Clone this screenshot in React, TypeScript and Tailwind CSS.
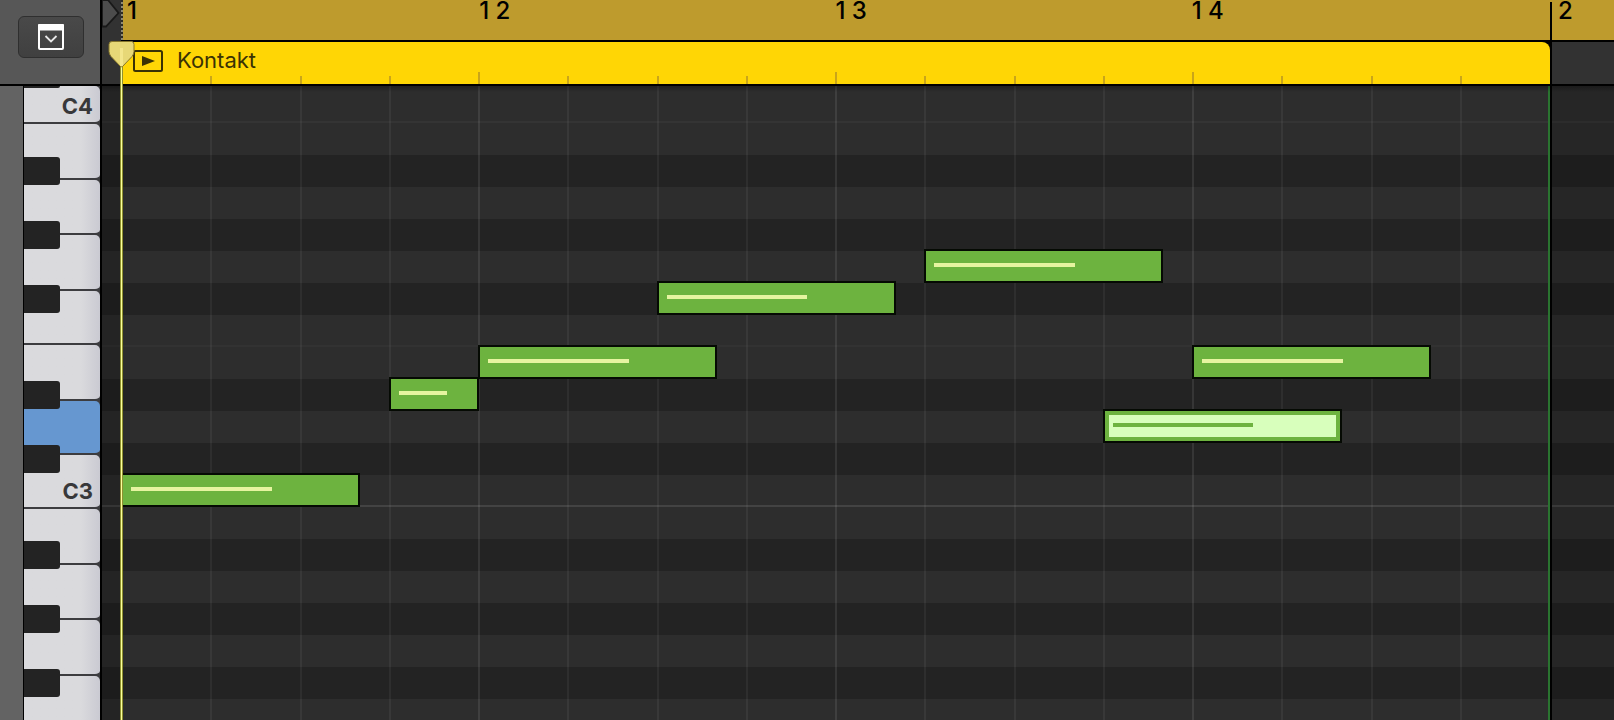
import React from "react";

type Note = { row: number; start: number; length: number; selected?: boolean };

const STEPS = 16;
const ROW = 32;
const TOP_ROW = 37;

const notes: Note[] = [
  { row: 12, start: 0, length: 2.667 },
  { row: 9, start: 3, length: 1 },
  { row: 8, start: 4, length: 2.667 },
  { row: 6, start: 6, length: 2.667 },
  { row: 5, start: 9, length: 2.667 },
  { row: 8, start: 12, length: 2.667 },
  { row: 10, start: 11, length: 2.667, selected: true },
];

const octave = ["B", "A#", "A", "G#", "G", "F#", "F", "E", "D#", "D", "C#", "C"];
const octaves = [3, 2, 1, 0];
const pitches = octaves.flatMap((o) => octave.map((p) => ({ pitch: p, name: `${p}${o}` })));

const whiteHeights: Record<string, string> = {
  B: "h-[56px]",
  A: "h-[55px]",
  G: "h-[56px]",
  F: "h-[54px]",
  E: "h-[56px]",
  D: "h-[54px]",
  C: "h-[54px]",
};

function WhiteKey({ name, height }: { name: string; height: string }) {
  const pressed = name === "D3";
  return (
    <div className={`${height} shrink-0 bg-[#3c3c3f]`}>
      <div
        className={`flex h-full items-end justify-end rounded-r-[5px] border-b-2 border-[#3c3c3f] pr-[7px] ${
          pressed ? "bg-[#6697d0]" : "bg-linear-to-r from-[#dadadd] from-75% to-[#cacad2]"
        }`}
      >
        {name.startsWith("C") && <span className="pb-0.5 text-[22px] leading-7 font-bold text-[#38383a]">{name}</span>}
      </div>
    </div>
  );
}

function Keyboard() {
  return (
    <div className="relative w-[76px] shrink-0 overflow-hidden">
      <div className="flex flex-col">
        <WhiteKey name="C4" height="h-[38px]" />
        {pitches
          .filter((p) => !p.pitch.includes("#"))
          .map((p) => (
            <WhiteKey key={p.name} name={p.name} height={whiteHeights[p.pitch]} />
          ))}
      </div>
      <div className="absolute top-0 left-0 w-9">
        <div className="h-[37px]">
          <div className="h-0.5 rounded-br-[3px] bg-[#232323]" />
        </div>
        {pitches.map((p) => (
          <div key={p.name} className="h-8 pt-0.5">
            {p.pitch.includes("#") && <div className="h-7 rounded-r-[3px] bg-[#232323]" />}
          </div>
        ))}
      </div>
    </div>
  );
}

function Rows() {
  return (
    <div className="flex flex-col">
      <div className="h-[37px] shrink-0 border-b-2 border-[#343434] bg-[#2d2d2d]" />
      {pitches.map((p) => (
        <div
          key={p.name}
          className={`h-8 shrink-0 ${p.pitch.includes("#") ? "bg-[#232323]" : "bg-[#2d2d2d]"} ${
            p.pitch === "C" ? "border-b-2 border-[#434343]" : ""
          } ${p.pitch === "F" ? "border-b-2 border-[#323232]" : ""}`}
        />
      ))}
    </div>
  );
}

function NoteBlock({ note }: { note: Note }) {
  return (
    <div
      className="absolute h-[34px] border-2 border-[#050a03] bg-[#6db33f]"
      style={{
        left: `${(note.start / STEPS) * 100}%`,
        top: TOP_ROW + (note.row - 1) * ROW - 2,
        width: `calc(${(note.length / STEPS) * 100}% + 1px)`,
      }}
    >
      <div className={`h-full ${note.selected ? "border-4 border-[#6db33f] bg-[#d8ffbc] pt-2 pl-1" : "pt-3 pl-2"}`}>
        <div className={`h-1 ${note.selected ? "w-[63%] bg-[#6db33f]" : "w-[62%] bg-[#e6f4a0]"}`} />
      </div>
    </div>
  );
}

function RegionIcon() {
  return (
    <svg width="30" height="23" viewBox="0 0 30 23" className="shrink-0" aria-hidden="true">
      <rect x="1" y="2" width="28" height="20" rx="1.5" fill="none" stroke="#3a3205" strokeWidth="2" />
      <path d="M9 7 L22 12 L9 17 Z" fill="#3a3205" />
    </svg>
  );
}

function Playhead() {
  return (
    <div className="absolute top-[41px] bottom-0 left-[108px] flex w-[27px] justify-center">
      <div className="w-[3px] border-x border-[#8f912f] bg-[#fbff9c]" />
      <svg className="absolute top-0 left-0" width="27" height="28" viewBox="0 0 27 28" aria-hidden="true">
        <path
          d="M4 0.5 H23.5 Q26 0.5 26 3.5 V10.5 Q26 13 24 15.5 L15 25 Q13.5 26.5 12 25 L3 15.5 Q1 13 1 10.5 V3.5 Q1 0.5 4 0.5 Z"
          fill="#e7d877"
          stroke="#86762c"
          strokeWidth="1"
        />
        <path d="M13.5 7 V25" stroke="#f3e68c" strokeWidth="3" />
      </svg>
    </div>
  );
}

export default function App() {
  return (
    <div className="relative flex h-screen flex-col overflow-hidden bg-[#232323] font-['Inter','Liberation_Sans',sans-serif]">
      <header className="flex h-[86px] shrink-0 border-b-2 border-black">
        <div className="flex w-[102px] shrink-0 items-start border-r-2 border-black bg-[#575757] pt-4 pl-[18px]">
          <button
            type="button"
            aria-label="View options"
            className="flex h-[42px] w-[66px] items-center justify-center rounded-md border border-[#2f2f2f] bg-linear-to-b from-[#494949] to-[#404040]"
          >
            <svg width="26" height="26" viewBox="0 0 26 26" aria-hidden="true">
              <rect x="1" y="1" width="24" height="24" rx="1" fill="none" stroke="#fff" strokeWidth="2" />
              <rect x="0" y="0" width="26" height="6.5" rx="1" fill="#fff" />
              <path d="M7.5 12 L13 17.5 L18.5 12" fill="none" stroke="#e8e8e8" strokeWidth="1.8" />
            </svg>
          </button>
        </div>
        <div className="w-[19px] shrink-0 bg-[#323232]">
          <svg width="19" height="28" viewBox="0 0 19 28" aria-hidden="true">
            <path d="M0 0 H6 L16.5 13 L4 26.5 H0 Z" fill="#4c4c4c" stroke="#191919" strokeWidth="1.8" />
          </svg>
        </div>
        <div className="flex min-w-0 flex-1 flex-col">
          <div className="flex h-[42px] shrink-0 border-b-2 border-black bg-[#be9b2d] text-2xl leading-[22px] font-medium text-black">
            <div className="w-0.5 shrink-0 bg-[repeating-linear-gradient(to_bottom,#2c2a24_0_2px,#8d8873_2px_4px)]" />
            <div className="grid min-w-0 flex-1 grid-cols-4 pr-0.5">
              <span className="pl-1">1</span>
              <span>1 2</span>
              <span>1 3</span>
              <span>1 4</span>
            </div>
            <div className="flex w-16 shrink-0">
              <div className="mt-0.5 w-0.5 bg-black" />
              <span className="pl-1.5">2</span>
            </div>
          </div>
          <div className="flex min-h-0 flex-1 bg-[#323232]">
            <div className="min-w-0 flex-1 bg-black">
              <div className="relative h-full rounded-tr-lg bg-[#ffd605]">
                <div className="flex items-center gap-3.5 pt-1 pl-3">
                  <RegionIcon />
                  <span className="text-[22px] leading-7 text-[#3a3205]">Kontakt</span>
                </div>
                <div className="absolute inset-x-0 bottom-0 grid grid-cols-16 items-end pr-px">
                  {Array.from({ length: STEPS }, (_, i) => (
                    <div key={i} className={`w-0.5 ${i === 0 ? "" : "bg-[#c9a51a]"} ${i % 4 === 0 ? "h-3" : "h-2"}`} />
                  ))}
                </div>
              </div>
            </div>
            <div className="w-16 shrink-0 border-l-2 border-black" />
          </div>
        </div>
      </header>

      <main className="flex min-h-0 flex-1">
        <div className="w-6 shrink-0 border-r border-black bg-[#636363]" />
        <Keyboard />
        <div className="w-0.5 shrink-0 bg-black" />
        <div className="relative min-w-0 flex-1 overflow-hidden">
          <Rows />
          <div className="absolute inset-0 flex">
            <div className="w-[19px] shrink-0 bg-black/20" />
            <div className="min-w-0 flex-1 pr-px">
              <div className="relative h-full">
                <div className="grid h-full grid-cols-16">
                  {Array.from({ length: STEPS }, (_, i) => (
                    <div key={i} className={`border-l-2 ${i % 4 === 0 ? "border-white/9" : "border-white/5"}`} />
                  ))}
                </div>
                {notes.map((n, i) => (
                  <NoteBlock key={i} note={n} />
                ))}
              </div>
            </div>
            <div className="w-16 shrink-0 border-l-2 border-black bg-black/15 shadow-[-2px_0_0_#2a7430]" />
          </div>
          <div className="absolute inset-x-0 top-0 h-1.5 bg-linear-to-b from-black/30 to-transparent" />
        </div>
      </main>

      <Playhead />
    </div>
  );
}
